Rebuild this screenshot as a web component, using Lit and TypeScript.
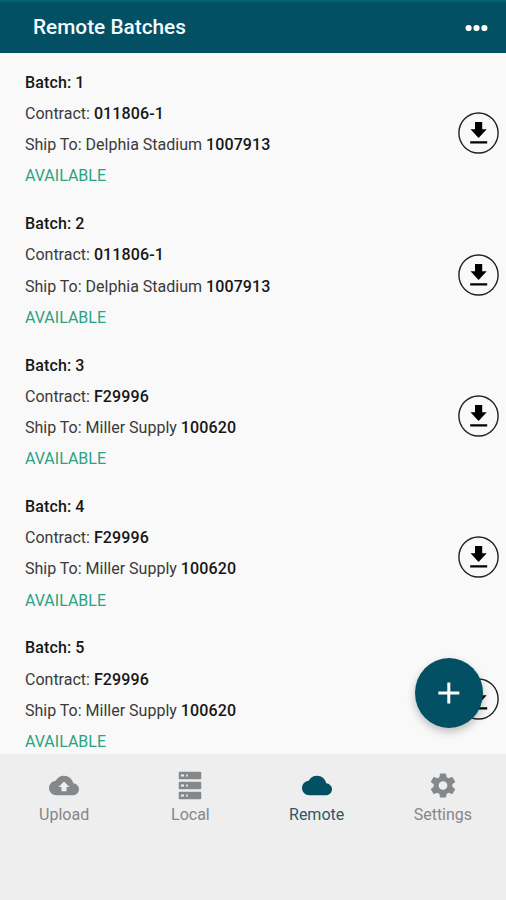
import { LitElement, html, css, svg } from "lit";
import { customElement, property } from "lit/decorators.js";
import { classMap } from "lit/directives/class-map.js";

interface Batch {
  id: number;
  contract: string;
  place: string;
  code: string;
}

const batches: Batch[] = [
  { id: 1, contract: "011806-1", place: "Delphia Stadium", code: "1007913" },
  { id: 2, contract: "011806-1", place: "Delphia Stadium", code: "1007913" },
  { id: 3, contract: "F29996", place: "Miller Supply", code: "100620" },
  { id: 4, contract: "F29996", place: "Miller Supply", code: "100620" },
  { id: 5, contract: "F29996", place: "Miller Supply", code: "100620" },
];

const cloud =
  "M19.35 10.04C18.67 6.59 15.64 4 12 4 9.11 4 6.6 5.64 5.35 8.04 2.34 8.36 0 10.91 0 14c0 3.31 2.69 6 6 6h13c2.76 0 5-2.24 5-5 0-2.64-2.05-4.78-4.65-4.96z";

const icons = {
  upload: svg`<path fill-rule="evenodd" d="${cloud}M14 13.2v3.6h-4v-3.6H7.6L12 8.7l4.4 4.5z"/>`,
  local: svg`<path fill-rule="evenodd" d="M3.6.6h16.8q.6 0 .6.6v5q0 .6-.6.6H3.6Q3 6.8 3 6.2v-5Q3 .6 3.6.6zM4.7 2.8v1.8h2.5V2.8zM8.9 2.8v1.8h1.3V2.8z
    M3.6 8.9h16.8q.6 0 .6.6v5q0 .6-.6.6H3.6q-.6 0-.6-.6v-5q0-.6.6-.6zM4.7 11.1v1.8h2.5v-1.8zM8.9 11.1v1.8h1.3v-1.8z
    M3.6 17.2h16.8q.6 0 .6.6v5q0 .6-.6.6H3.6q-.6 0-.6-.6v-5q0-.6.6-.6zM4.7 19.4v1.8h2.5v-1.8zM8.9 19.4v1.8h1.3v-1.8z"/>`,
  remote: svg`<path d=${cloud} />`,
  settings: svg`<path d="M19.43 12.98c.04-.32.07-.64.07-.98s-.03-.66-.07-.98l2.11-1.65c.19-.15.24-.42.12-.64l-2-3.46c-.12-.22-.39-.3-.61-.22l-2.49 1c-.52-.4-1.08-.73-1.69-.98l-.38-2.65C14.46 2.18 14.25 2 14 2h-4c-.25 0-.46.18-.49.42l-.38 2.65c-.61.25-1.17.59-1.69.98l-2.49-1c-.23-.09-.49 0-.61.22l-2 3.46c-.13.22-.07.49.12.64l2.11 1.65c-.04.32-.07.65-.07.98s.03.66.07.98l-2.11 1.65c-.19.15-.24.42-.12.64l2 3.46c.12.22.39.3.61.22l2.49-1c.52.4 1.08.73 1.69.98l.38 2.65c.03.24.24.42.49.42h4c.25 0 .46-.18.49-.42l.38-2.65c.61-.25 1.17-.59 1.69-.98l2.49 1c.23.09.49 0 .61-.22l2-3.46c.12-.22.07-.49-.12-.64l-2.11-1.65zM12 15.5c-1.93 0-3.5-1.57-3.5-3.5s1.57-3.5 3.5-3.5 3.5 1.57 3.5 3.5-1.57 3.5-3.5 3.5z"/>`,
};

@customElement("batch-row")
class BatchRow extends LitElement {
  @property({ attribute: false }) batch!: Batch;

  static styles = css`
    :host {
      display: flex;
      flex: none;
      box-sizing: border-box;
      height: 141.4px;
      padding: 0 7.5px 0 25px;
      align-items: center;
      justify-content: space-between;
    }
    .lines {
      padding-bottom: 8px;
      font-size: 16px;
      line-height: 31.2px;
      color: #3a3a3a;
      white-space: nowrap;
    }
    b {
      font-weight: 500;
      color: #161616;
      letter-spacing: 0.12px;
    }
    .status {
      color: #2ba283;
    }
    .download {
      display: block;
      width: 41px;
      height: 42px;
    }
  `;

  render() {
    const b = this.batch;
    return html`
      <div class="lines">
        <div><b>Batch: ${b.id}</b></div>
        <div>Contract: <b>${b.contract}</b></div>
        <div>Ship To: ${b.place} <b>${b.code}</b></div>
        <div class="status">AVAILABLE</div>
      </div>
      <svg class="download" viewBox="0 0 41 42">
        <ellipse cx="20.5" cy="21" rx="19.6" ry="20" fill="none" stroke="#222" stroke-width="1.4" />
        <path d="M17 10h7.2v7.3h4.5L20.6 26l-8.1-8.7H17zM12.2 29.2h17v2.3h-17z" />
      </svg>
    `;
  }
}

@customElement("app-root")
class AppRoot extends LitElement {
  static styles = css`
    :host {
      display: flex;
      flex-direction: column;
      position: relative;
      height: 900px;
      overflow: hidden;
      background: #f9f9f9;
      font-family: Roboto, sans-serif;
    }
    .bar {
      display: flex;
      flex: none;
      box-sizing: border-box;
      height: 53px;
      padding: 0 18px 0 33px;
      align-items: center;
      justify-content: space-between;
      border-top: 2px solid #006479;
      background: #035064;
      color: #f4fbfd;
    }
    .title {
      padding-bottom: 2px;
      font-size: 20.8px;
      font-weight: 500;
      line-height: 26px;
    }
    .more {
      width: 23px;
      height: 8px;
      fill: #fff;
    }
    .list {
      display: flex;
      flex: 1;
      flex-direction: column;
      min-height: 0;
      overflow: hidden;
      padding-top: 9.6px;
      box-sizing: border-box;
    }
    .tabs {
      display: grid;
      flex: none;
      grid-template-columns: repeat(4, 1fr);
      align-items: start;
      box-sizing: border-box;
      height: 146px;
      padding: 17px 0 0 1px;
      background: #eee;
    }
    .tab {
      display: flex;
      flex-direction: column;
      align-items: center;
      color: #858789;
      font-size: 16px;
      line-height: 20px;
    }
    .tab svg {
      width: 30px;
      height: 29px;
      margin-bottom: 5px;
      fill: #85888a;
    }
    .tab.active {
      color: #2d5968;
    }
    .tab.active svg {
      fill: #035064;
    }
    .fab {
      position: absolute;
      left: 415px;
      top: 658px;
      width: 68px;
      height: 70px;
      border-radius: 50%;
      background: #035064;
      box-shadow: 0 4px 9px rgba(0, 0, 0, 0.24);
    }
    .fab svg {
      display: block;
      width: 68px;
      height: 70px;
      fill: #fff;
    }
  `;

  render() {
    const tabs = [
      { label: "Upload", icon: icons.upload },
      { label: "Local", icon: icons.local },
      { label: "Remote", icon: icons.remote },
      { label: "Settings", icon: icons.settings },
    ];
    return html`
      <header class="bar">
        <div class="title">Remote Batches</div>
        <svg class="more" viewBox="0 0 23 8">
          <circle cx="3.6" cy="4" r="3.1" />
          <circle cx="11.5" cy="4" r="3.1" />
          <circle cx="19.4" cy="4" r="3.1" />
        </svg>
      </header>
      <main class="list">
        ${batches.map((b) => html`<batch-row .batch=${b}></batch-row>`)}
      </main>
      <nav class="tabs">
        ${tabs.map(
          (t) => html`
            <div class=${classMap({ tab: true, active: t.label === "Remote" })}>
              <svg viewBox="0 0 24 24" preserveAspectRatio="none">${t.icon}</svg>
              <span>${t.label}</span>
            </div>
          `
        )}
      </nav>
      <div class="fab">
        <svg viewBox="0 0 68 70">
          <path d="M32.3 24.5h3v9h9v3h-9v9h-3v-9h-9v-3h9z" />
        </svg>
      </div>
    `;
  }
}
